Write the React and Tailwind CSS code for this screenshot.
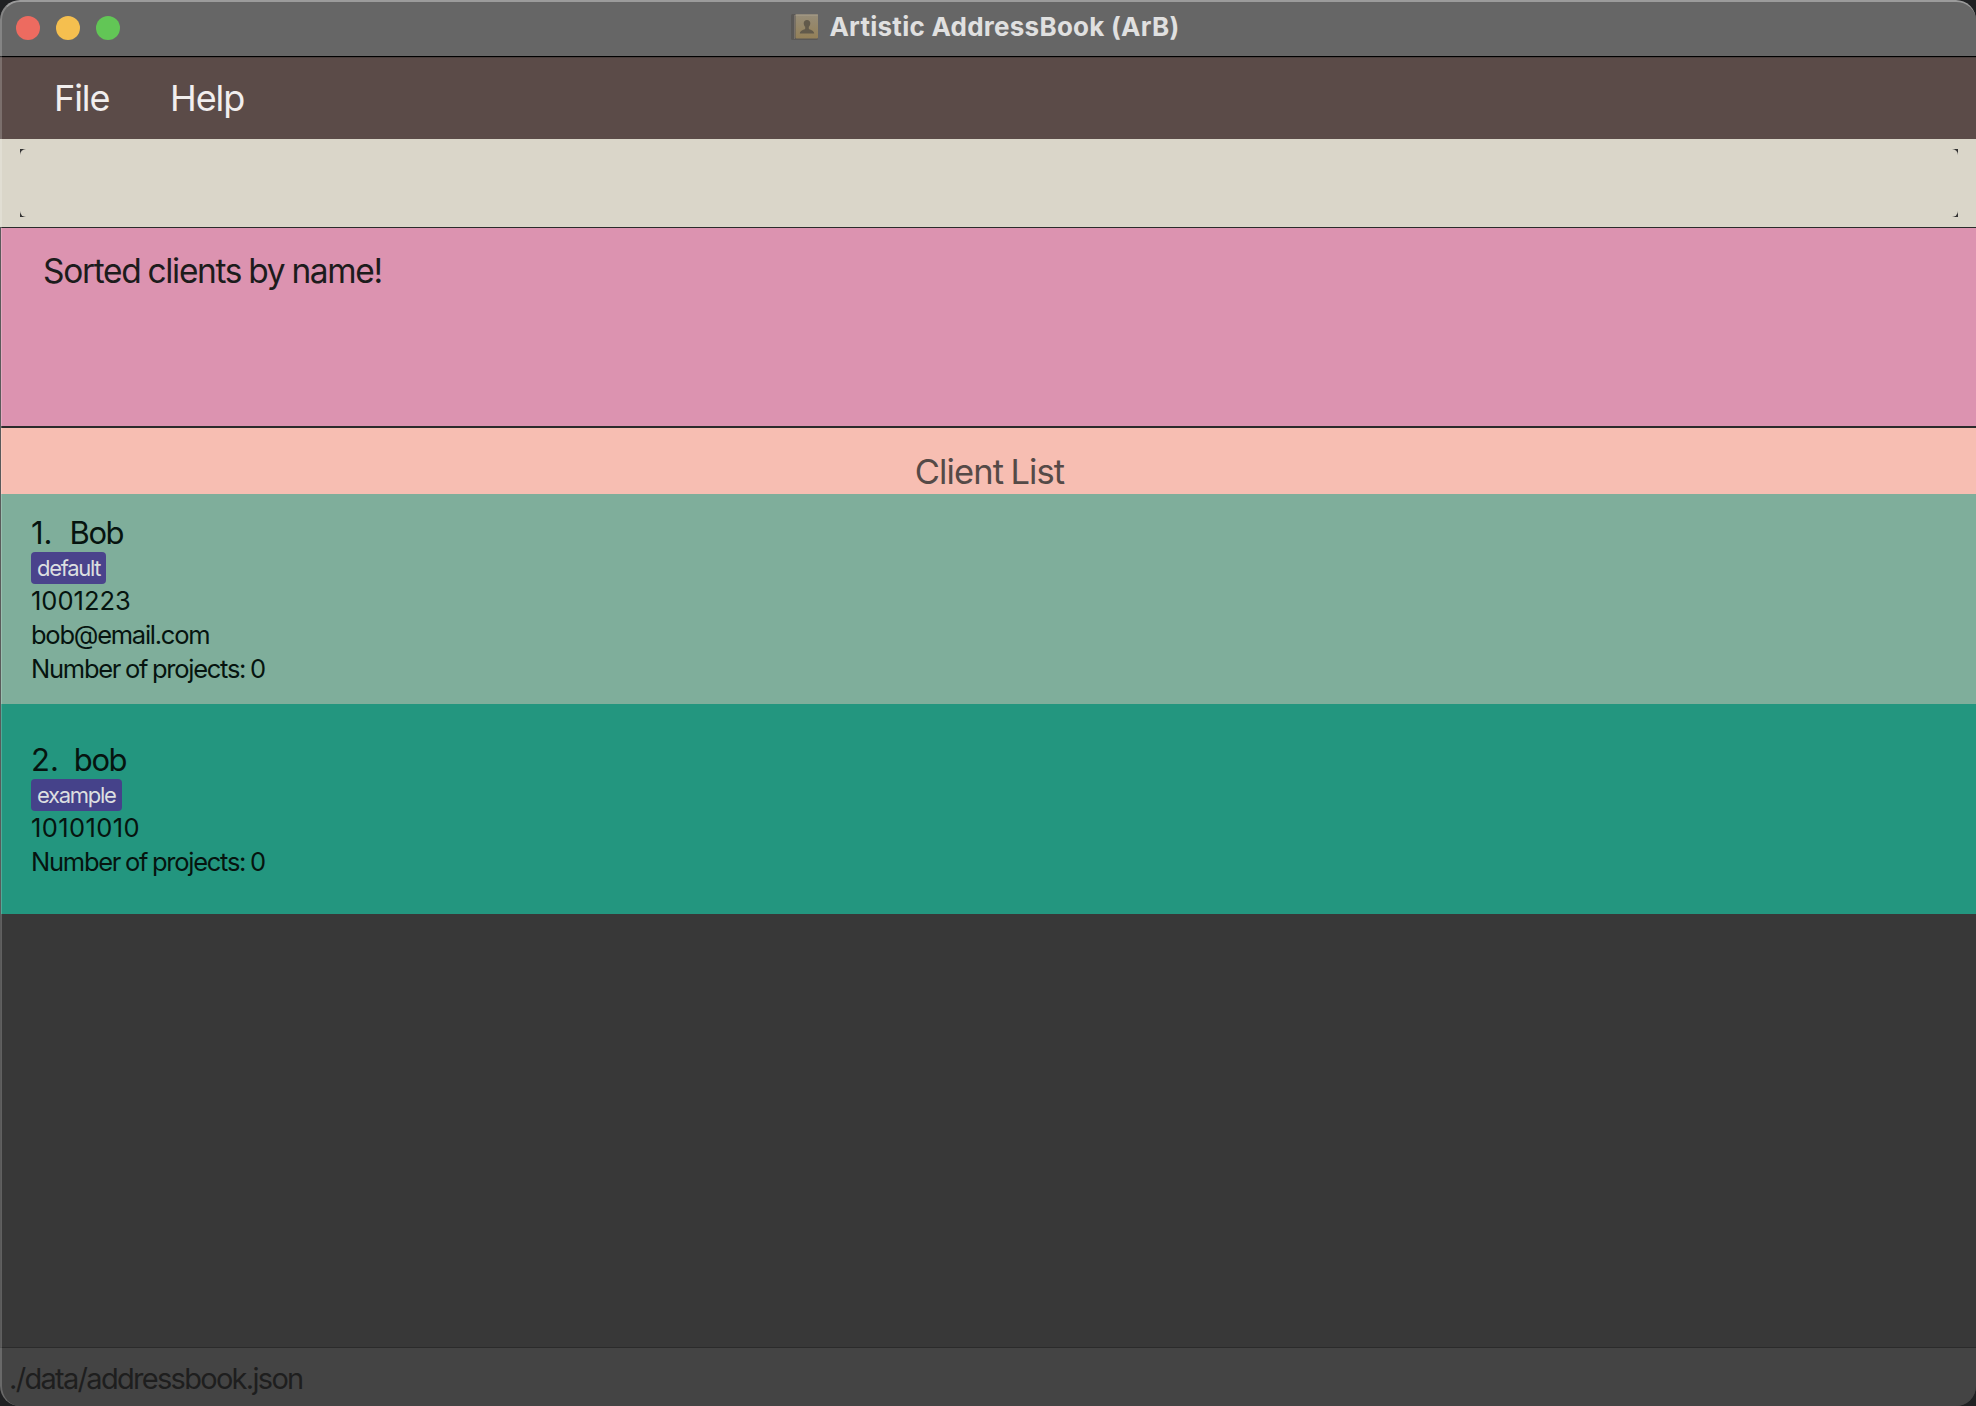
import React from "react";

function BookIcon() {
  return (
    <svg className="h-[28px] w-[30px] shrink-0" viewBox="0 0 30 28">
      <defs>
        <linearGradient id="cover" x1="0" y1="0" x2="0" y2="1">
          <stop offset="0" stopColor="#968d79" />
          <stop offset="1" stopColor="#948058" />
        </linearGradient>
      </defs>
      <rect x="1" y="1" width="27" height="26" rx="1.5" fill="#5a5856" />
      <rect x="4" y="2" width="1" height="24" fill="#77706a" />
      <rect x="5.500" y="1.500" width="22.500" height="24" rx="1" fill="url(#cover)" />
      <rect x="5.500" y="1.500" width="22.500" height="1" fill="#aaa08c" />
      <path
        d="M17 7c2.100 0 3.300 1.300 3.300 3.300 0 1.600-.7 2.800-1.500 3.500v1.900c.8 1.200 5 1.200 5.400 4.800H9.800c.4-3.600 4.600-3.600 5.400-4.800v-1.900c-.8-.7-1.500-1.900-1.500-3.500 0-2 1.200-3.300 3.300-3.300z"
        fill="#625a4b"
      />
    </svg>
  );
}

function TitleBar() {
  return (
    <header className="relative flex h-[57px] items-start justify-center border-b border-black bg-[#666666]">
      <div className="absolute left-[16px] top-[16px] flex gap-4">
        <span className="size-6 rounded-full bg-[#ed6b60]" />
        <span className="size-6 rounded-full bg-[#f5bf4f]" />
        <span className="size-6 rounded-full bg-[#62c656]" />
      </div>
      <div className="ml-[-6px] flex h-[54px] items-center gap-[9px]">
        <BookIcon />
        <span className="whitespace-pre text-[26px] font-bold leading-[54px] tracking-[0.26px] text-[#e0e0e0]">Artistic AddressBook (ArB)</span>
      </div>
    </header>
  );
}

function Tag({ children }) {
  return (
    <span className="flex h-[32px] items-center rounded-[4px] bg-[#483d8b]/95 pl-[6px] pr-[6px] text-[22px] leading-[32px] tracking-[-1.3px] text-[#dcdfe0]">
      {children}
    </span>
  );
}

const clients = [
  {
    name: "Bob",
    tag: "default",
    phone: "1001223",
    phoneStyle: "tracking-[0px]",
    nameStyle: "gap-[17px]",
    lines: ["bob@email.com", "Number of projects: 0"],
    row: "bg-[#7fae9b]",
  },
  {
    name: "bob",
    tag: "example",
    phone: "10101010",
    phoneStyle: "tracking-[0.4px]",
    nameStyle: "gap-[15px]",
    lines: ["Number of projects: 0"],
    row: "bg-[#23967f]",
  },
];

function ClientRow({ index, client }) {
  return (
    <li className={"flex h-[210px] flex-col items-start justify-center pl-[31px] pt-[2px] text-[#06140f] " + client.row}>
      <div className={"flex h-[38px] text-[31px] leading-[38px] " + client.nameStyle}>
        <span>{index}.</span>
        <span className="tracking-[-1.4px]">{client.name}</span>
      </div>
      <Tag>{client.tag}</Tag>
      <span className={"text-[25.500px] leading-[34px] " + client.phoneStyle}>{client.phone}</span>
      {client.lines.map((line) => (
        <span key={line} className="text-[25.500px] leading-[34px] tracking-[-1.25px] [word-spacing:-1.2px]">{line}</span>
      ))}
    </li>
  );
}

export default function App() {
  return (
    <div className="h-[1406px] w-[1976px] overflow-hidden bg-[#202123] font-['Inter',sans-serif]">
      <div className="relative flex h-full flex-col overflow-hidden rounded-[20px] bg-[#383838]">
        <TitleBar />
        <nav className="flex h-[82px] items-center border-t border-[#4b3f3d] bg-[#5b4b48] pl-[54px] text-[36px] leading-[80px] tracking-[-1.1px] text-[#f1eeee]">
          <span className="h-[82px] w-[116px]">File</span>
          <span className="h-[82px]">Help</span>
        </nav>
        <div className="h-[89px] border-b border-[#2b2b2b] bg-[#dad6c9] pl-[20px] pr-[18px] pt-[10px]">
          <div className="h-[68px] bg-[#333333]">
            <div className="h-full rounded-[6px] bg-[#dad6c9]" />
          </div>
        </div>
        <div className="h-[200px] border-b-2 border-[#2b2b2b] bg-[#dc93b0] pl-[43px] pt-[22px] text-[33.500px] leading-[42px] tracking-[-1.33px] [word-spacing:-1px] text-[#1c1c1c]">
          Sorted clients by name!
        </div>
        <div className="h-[66px] bg-[#f7beb2] pl-[3px] pt-[22px] text-center text-[34.500px] leading-[44px] tracking-[-0.9px] [word-spacing:-1.5px] text-[#554a47]">
          Client List
        </div>
        <ul>
          {clients.map((client, i) => (
            <ClientRow key={client.name} index={i + 1} client={client} />
          ))}
        </ul>
        <div className="flex-1" />
        <footer className="h-[59px] border-t border-[#2b2b2b] bg-[#444444] pl-[9px] text-[29px] leading-[61px] tracking-[-1.7px] text-[#1e1e1e]">
          ./data/addressbook.json
        </footer>
        <div className="pointer-events-none absolute inset-0 rounded-[20px] border-l-2 border-t-2 border-l-white/20 border-t-white/35" />
        <div className="pointer-events-none absolute bottom-[59px] left-0 top-[227px] w-px bg-[#5a5a5a]" />
      </div>
    </div>
  );
}
